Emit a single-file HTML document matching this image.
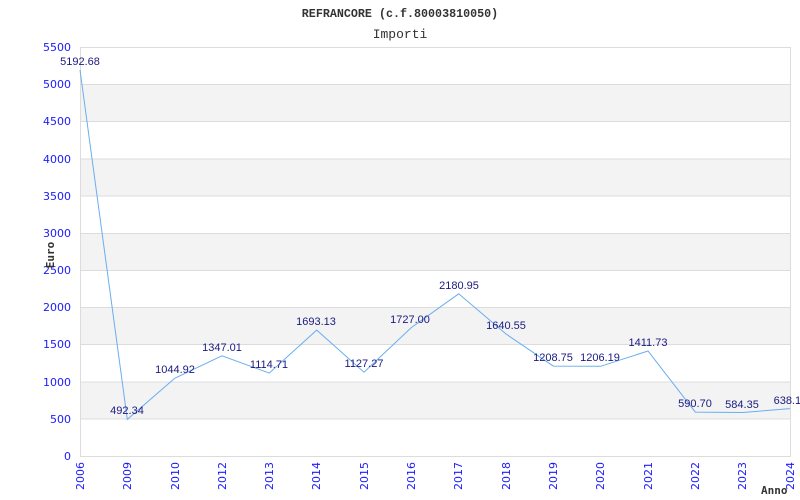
<!DOCTYPE html>
<html><head><meta charset="utf-8"><style>
html,body{margin:0;padding:0;background:#fff;}
svg{display:block;}
</style></head><body>
<svg width="800" height="500" viewBox="0 0 800 500" xmlns="http://www.w3.org/2000/svg">
<rect x="0" y="0" width="800" height="500" fill="#fff"/>
<text x="400" y="17" text-anchor="middle" font-family="'Liberation Mono',monospace" font-weight="bold" font-size="11.7" fill="#333">REFRANCORE (c.f.80003810050)</text>
<text x="400" y="38" text-anchor="middle" font-family="'Liberation Mono',monospace" font-size="13" fill="#333">Importi</text>
<g fill="#f3f3f3">
<rect x="80" y="84.2" width="710" height="37.2"/>
<rect x="80" y="158.6" width="710" height="37.2"/>
<rect x="80" y="233" width="710" height="37.2"/>
<rect x="80" y="307.3" width="710" height="37.2"/>
<rect x="80" y="381.6" width="710" height="37.2"/>
</g>
<g stroke="#dcdcdc" stroke-width="1">
<line x1="80" y1="47.5" x2="790" y2="47.5"/>
<line x1="80" y1="84.5" x2="790" y2="84.5"/>
<line x1="80" y1="121.5" x2="790" y2="121.5"/>
<line x1="80" y1="159" x2="790" y2="159"/>
<line x1="80" y1="196" x2="790" y2="196"/>
<line x1="80" y1="233.5" x2="790" y2="233.5"/>
<line x1="80" y1="270.5" x2="790" y2="270.5"/>
<line x1="80" y1="307.5" x2="790" y2="307.5"/>
<line x1="80" y1="344.5" x2="790" y2="344.5"/>
<line x1="80" y1="382" x2="790" y2="382"/>
<line x1="80" y1="419" x2="790" y2="419"/>
<line x1="80" y1="456.5" x2="790" y2="456.5"/>
<line x1="80.5" y1="47" x2="80.5" y2="457"/>
<line x1="790.5" y1="47" x2="790.5" y2="457"/>
</g>
<g font-family="'DejaVu Sans',sans-serif" font-size="11" fill="#1a1aff" text-anchor="end">
<text x="71" y="51">5500</text>
<text x="71" y="88">5000</text>
<text x="71" y="125">4500</text>
<text x="71" y="163">4000</text>
<text x="71" y="200">3500</text>
<text x="71" y="237">3000</text>
<text x="71" y="274">2500</text>
<text x="71" y="311">2000</text>
<text x="71" y="348">1500</text>
<text x="71" y="386">1000</text>
<text x="71" y="423">500</text>
<text x="71" y="460">0</text>
</g>
<text transform="translate(54,255) rotate(-90)" text-anchor="middle" font-family="'DejaVu Sans Mono',monospace" font-weight="bold" font-size="11" fill="#333">Euro</text>
<polyline fill="none" stroke="#6aaef0" stroke-width="1" points="80,69.9 127.3,419.4 174.7,378.3 222,355.8 269.3,373.1 316.7,330.1 364,372.2 411.3,327.6 458.7,293.8 506,334 553.3,366.1 600.7,366.3 648,351 695.3,412.1 742.7,412.5 790,408.6"/>
<g font-family="'Liberation Sans',sans-serif" font-size="11" fill="#1a1a80" text-anchor="middle">
<text x="80" y="65">5192.68</text>
<text x="127" y="414">492.34</text>
<text x="175" y="373">1044.92</text>
<text x="222" y="351">1347.01</text>
<text x="269" y="368">1114.71</text>
<text x="316" y="325">1693.13</text>
<text x="364" y="367">1127.27</text>
<text x="410" y="323">1727.00</text>
<text x="459" y="289">2180.95</text>
<text x="506" y="329">1640.55</text>
<text x="553" y="361">1208.75</text>
<text x="600" y="361">1206.19</text>
<text x="648" y="346">1411.73</text>
<text x="695" y="407">590.70</text>
<text x="742" y="408">584.35</text>
<text x="790" y="404">638.11</text>
</g>
<g font-family="'DejaVu Sans',sans-serif" font-size="11" fill="#1a1aff" text-anchor="end">
<text transform="translate(84,462) rotate(-90)">2006</text>
<text transform="translate(131,462) rotate(-90)">2009</text>
<text transform="translate(179,462) rotate(-90)">2010</text>
<text transform="translate(226,462) rotate(-90)">2012</text>
<text transform="translate(273,462) rotate(-90)">2013</text>
<text transform="translate(320,462) rotate(-90)">2014</text>
<text transform="translate(368,462) rotate(-90)">2015</text>
<text transform="translate(415,462) rotate(-90)">2016</text>
<text transform="translate(462,462) rotate(-90)">2017</text>
<text transform="translate(510,462) rotate(-90)">2018</text>
<text transform="translate(557,462) rotate(-90)">2019</text>
<text transform="translate(604,462) rotate(-90)">2020</text>
<text transform="translate(652,462) rotate(-90)">2021</text>
<text transform="translate(699,462) rotate(-90)">2022</text>
<text transform="translate(746,462) rotate(-90)">2023</text>
<text transform="translate(794,462) rotate(-90)">2024</text>
</g>
<text x="761" y="494" font-family="'DejaVu Sans Mono',monospace" font-weight="bold" font-size="11" fill="#333">Anno</text>
</svg>
</body></html>
